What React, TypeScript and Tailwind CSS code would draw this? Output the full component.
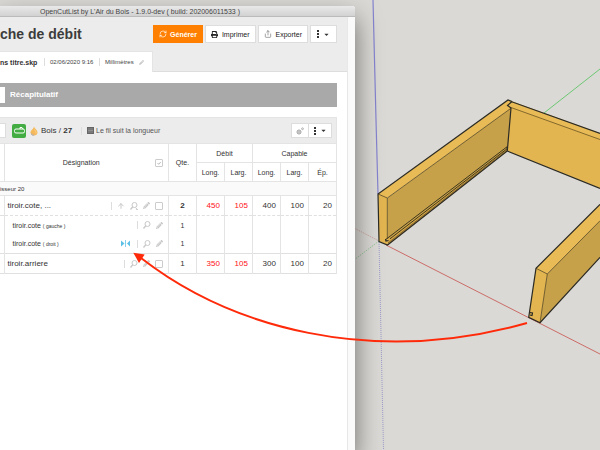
import { ArrowUp, RefreshCw, Share } from "lucide-react";
import type { ReactNode } from "react";
import { FaCaretDown, FaPencilAlt, FaPrint } from "react-icons/fa";

type PartRow = {
  name: string;
  note?: string;
  qty: number;
  cut?: [number, number];
  bulk?: [number, number, number];
  up?: boolean;
  mirror?: boolean;
};

const parts: PartRow[] = [
  { name: "tiroir.cote, ...", qty: 2, cut: [450, 105], bulk: [400, 100, 20], up: true },
  { name: "tiroir.cote", note: "( gauche )", qty: 1 },
  { name: "tiroir.cote", note: "( droit )", qty: 1, mirror: true },
  { name: "tiroir.arriere", qty: 1, cut: [350, 105], bulk: [300, 100, 20] },
];

function SearchIcon({ people = false }: { people?: boolean }) {
  return (
    <svg viewBox="0 0 16 16" className="size-2" fill="none" stroke="currentColor" strokeWidth="2">
      <circle cx="9" cy="6" r="5" />
      <path d="M5.5 9.5 1 15" strokeWidth="2.5" />
      {people && <path d="M11 11.5 15 15M12.500 15h3" />}
    </svg>
  );
}

function MirrorIcon() {
  return (
    <svg viewBox="0 0 18 14" className="mr-[2px] h-[7px] w-[9px]" fill="#5cc0e6">
      <path d="M0 1 7 7 0 13zM18 1 12 7 18 13zM8.500 0h1.500v14H8.500z" />
    </svg>
  );
}

function GearsIcon() {
  return (
    <svg viewBox="0 0 16 16" className="size-2" fill="none" stroke="#999" strokeWidth="2">
      <circle cx="6" cy="10" r="4" />
      <circle cx="6" cy="10" r="1" />
      <circle cx="13" cy="3.500" r="1.800" strokeWidth="1.500" />
    </svg>
  );
}

function MenuIcon() {
  return (
    <span className="flex items-center gap-1">
      <svg viewBox="0 0 2 8" className="h-2 w-[2px]" fill="#333">
        <path d="M0 0h2v2H0zM0 3h2v2H0zM0 6h2v2H0z" />
      </svg>
      <FaCaretDown className="size-[7px] text-[#333]" />
    </span>
  );
}

function ToolButton({ children }: { children: ReactNode }) {
  return (
    <button className="flex h-[18px] items-center gap-1 border border-[#ddd] bg-white px-[5px] text-[7px] text-[#222]">
      {children}
    </button>
  );
}

function Divider() {
  return <span className="h-2 w-px bg-[#ddd]" />;
}

function Header() {
  return (
    <header className="flex flex-col bg-[#ececec] pt-2">
      <div className="flex items-center justify-between pr-[10px]">
        <h1 className="text-[14px] font-bold text-[#3c3c3c]">che de débit</h1>
        <div className="flex gap-[2px]">
          <button className="flex h-[18px] items-center gap-[3px] bg-[#ff8000] px-[6px] text-[7px] font-bold text-white">
            <RefreshCw className="size-2" />
            Générer
          </button>
          <ToolButton>
            <FaPrint className="size-[7px]" />
            Imprimer
          </ToolButton>
          <ToolButton>
            <Share className="size-2 text-[#777]" />
            Exporter
          </ToolButton>
          <button aria-label="Menu" className="flex h-[18px] items-center border border-[#ddd] bg-white px-[6px]">
            <MenuIcon />
          </button>
        </div>
      </div>
      <div className="mt-2 flex h-[21px]">
        <div className="flex w-[153px] items-center gap-[5px] border-t border-r border-[#e4e4e4] bg-white text-[6px] text-[#444]">
          <strong className="w-[39px] text-[7px] text-[#333]">ns titre.skp</strong>
          <Divider />
          <span className="w-[44px]">02/06/2020 9:16</span>
          <Divider />
          <span>Millimètres</span>
          <FaPencilAlt className="size-[5px] text-[#c4c4c4]" />
        </div>
        <div className="flex-1 border-b border-[#ddd]" />
      </div>
    </header>
  );
}

function GroupBar() {
  return (
    <div className="mt-[10px] flex h-[26px] items-center border-t border-r border-[#e4e4e4] bg-[#ececec] pr-1">
      <button aria-label="Replier" className="h-[15px] w-[6px] border border-l-0 border-[#ddd] bg-white" />
      <button aria-label="Imprimer le groupe" className="ml-[6px] flex h-[14px] w-[14px] items-center justify-center rounded-[2px] bg-[#43ac43]">
        <svg viewBox="0 0 22 14" className="h-[7px] w-[11px]" fill="none" stroke="#fff" strokeWidth="2">
          <rect x="1" y="4" width="20" height="8" rx="3" />
          <path d="M12 4V1h4l2 3" />
        </svg>
      </button>
      <svg viewBox="0 0 16 20" className="ml-1 h-[10px] w-2">
        <path d="M8 1c1 5 7 6 7 12 0 4-3 6-7 6s-7-2-7-6C1 8 7 7 8 1z" fill="#f5b85a" />
        <path d="M3 13c0 3 3 5 6 4l-2 3C3 19 1 17 3 13z" fill="#b8b0b0" />
        <path d="M9 7c1 3 4 4 3 8" fill="none" stroke="#fbd58e" strokeWidth="2" />
      </svg>
      <span className="ml-[3px] w-[40px] text-[8px] text-[#333]">
        Bois / <strong>27</strong>
      </span>
      <Divider />
      <svg viewBox="0 0 14 14" className="ml-[5px] size-[7px]">
        <path d="M0 0h14v14H0z" fill="#666" />
        <path d="M2 4h10M2 7h10M2 10h10" stroke="#bbb" strokeWidth="1" />
      </svg>
      <span className="ml-[2px] text-[7px] text-[#555]">Le fil suit la longueur</span>
      <div className="ml-auto flex h-[15px] border border-[#ddd] bg-white">
        <button aria-label="Réglages" className="flex w-[17px] items-center justify-center border-r border-[#ddd]">
          <GearsIcon />
        </button>
        <button aria-label="Actions" className="flex w-[22px] items-center justify-center">
          <MenuIcon />
        </button>
      </div>
    </div>
  );
}

function PartTools({ part }: { part: PartRow }) {
  return (
    <span className="flex items-center gap-[5px] text-[#c8c8c8]">
      {part.mirror && <MirrorIcon />}
      <Divider />
      {part.up && <ArrowUp className="size-2" strokeWidth={3} />}
      <SearchIcon people={part.up} />
      <FaPencilAlt className="size-[7px]" />
      {!part.note && (
        <input
          type="checkbox"
          aria-label={part.name}
          className="size-2 appearance-none rounded-[1px] border border-[#ccc]"
        />
      )}
    </span>
  );
}

function PartLine({ part }: { part: PartRow }) {
  const cell = "border-x border-[#e4e4e4] p-0";
  const line = part.note ? "h-[19px]" : part.up ? "h-[20px] border-b border-dashed border-[#e0e0e0]" : "h-[20px] border-y border-[#e0e0e0]";
  const num = `${cell} pr-1 text-right`;
  return (
    <tr className={`${line} ${part.note ? "text-[7px]" : "text-[8px]"}`}>
      <td />
      <td className={cell}>
        <div className={`flex items-center justify-between pr-[5px] ${part.note ? "pl-2" : "pl-[3px]"}`}>
          <span>
            {part.name} {part.note && <span className="text-[5px]">{part.note}</span>}
          </span>
          <PartTools part={part} />
        </div>
      </td>
      <td className={`${cell} text-center ${part.up ? "font-bold" : ""}`}>{part.qty}</td>
      <td className={`${num} text-[#ff1018]`}>{part.cut?.[0]}</td>
      <td className={`${num} text-[#ff1018]`}>{part.cut?.[1]}</td>
      <td className={num}>{part.bulk?.[0]}</td>
      <td className={num}>{part.bulk?.[1]}</td>
      <td className={num}>{part.bulk?.[2]}</td>
    </tr>
  );
}

function PartsTable() {
  const head = "border border-[#e4e4e4] p-0 font-normal";
  return (
    <table className="w-full table-fixed border-collapse text-[7px] text-[#333]">
      <colgroup>
        <col className="w-1" />
        <col />
        <col className="w-7" />
        <col className="w-7" />
        <col className="w-7" />
        <col className="w-7" />
        <col className="w-7" />
        <col className="w-7" />
      </colgroup>
      <thead>
        <tr className="h-[19px]">
          <td rowSpan={2} className="border-y border-[#e4e4e4] p-0" />
          <th rowSpan={2} className={head}>
            <div className="flex items-center pr-[5px]">
              <span className="flex-1 pl-[3px]">Désignation</span>
              <span className="grid size-2 place-items-center">
                <input
                  type="checkbox"
                  defaultChecked
                  aria-label="Tout sélectionner"
                  className="col-start-1 row-start-1 size-2 appearance-none rounded-[1px] border border-[#ccc]"
                />
                <svg viewBox="0 0 8 8" className="pointer-events-none col-start-1 row-start-1 size-2" fill="none" stroke="#bbb">
                  <path d="m2.500 4 1.200 1.300L5.800 3" />
                </svg>
              </span>
            </div>
          </th>
          <th rowSpan={2} className={head}>Qte.</th>
          <th colSpan={2} className={head}>Débit</th>
          <th colSpan={3} className={head}>Capable</th>
        </tr>
        <tr className="h-[19px]">
          <th className={head}>Long.</th>
          <th className={head}>Larg.</th>
          <th className={head}>Long.</th>
          <th className={head}>Larg.</th>
          <th className={head}>Ép.</th>
        </tr>
      </thead>
      <tbody>
        <tr className="h-[14px] bg-[#fafafa] text-left text-[6px]">
          <th colSpan={8} className="border-y border-r border-[#e4e4e4] p-0 font-normal">isseur 20</th>
        </tr>
        {parts.map((part, i) => (
          <PartLine key={i} part={part} />
        ))}
      </tbody>
    </table>
  );
}

/* Drawer model behind the dialog */
function Scene() {
  return (
    <svg viewBox="0 0 600 450" preserveAspectRatio="xMinYMin slice" className="absolute inset-0 size-full" fill="none">
      <path d="m373 0 3 120 2 74" stroke="#8583cf" strokeWidth="1.200" />
      <path d="m379 242 4.500 208" stroke="#9a9acb" strokeDasharray="1 1" />
      <path d="M544 113 600 69" stroke="#6cc874" />
      <path d="m379 241-25 19" stroke="#83bd83" strokeDasharray="1.500 1" strokeWidth=".7" />
      <path d="m352 227 27 14" stroke="#c99086" strokeDasharray="1.500 1" strokeWidth=".7" />
      <path d="m386 245 214 109" stroke="#c9605b" strokeWidth=".9" />

      {/* back panel */}
      <path d="m508 100 92 33.300v55L507.300 151z" fill="#e2b551" />
      <path d="m508 100 92 33.300v6l-89-31.800z" fill="#e8bb57" />
      <path d="m511 107.500 89 32" stroke="#6b5422" strokeWidth=".8" />
      <path d="m511 101.500 89 32M507.300 151l92.700 37.500" stroke="#2b2a24" strokeWidth="1.200" />

      {/* left side */}
      <path d="m387.500 198 123.500-90-3.700 43-120 94z" fill="#c6a149" />
      <path d="m378 194 130-94 4 1.500-1 6.500-124 90z" fill="#e8bb57" />
      <path d="m378 194 9.300 4 .4 47-8.700-3.500z" fill="#e2b551" />
      <path d="m388 239.500 119.300-91.500v3L388 245z" fill="#d5a747" />
      <path d="m387.300 198 124-90M378 194l9.300 4v41" stroke="#59481f" strokeWidth=".8" />
      <path d="m386 239.300 121-92.500v2l-117 90" stroke="#2f2917" strokeWidth=".9" />
      <path d="m388 243 119-93" stroke="#6d5523" strokeWidth=".7" />
      <path d="M512 101.500 508 100l-130 94 1 47.500 8.500 3.500 119.800-94 3.700-43M512 101.500l-4.500 4 3.500 2.500M385.500 239l.5 2 2.500-.5" stroke="#2b2a24" strokeWidth="1.200" />

      {/* right side */}
      <path d="m536 268.300 64-64v16.500L547.300 274z" fill="#e8bb57" />
      <path d="m547.300 274 52.700-53.200v36.500L540 322.700z" fill="#c6a149" />
      <path d="m536 268.300 11.300 5.700-7.300 48.700-11.300-5.400z" fill="#e2b551" />
      <path d="m536 268.300 11.300 5.700 52.700-53.200M547.300 274l-7.300 48.700" stroke="#59481f" strokeWidth=".8" />
      <path d="m600 204.300-64 64-7.300 49 11.300 5.400 60-65.400M530 312.500l2.500.5-.5 2.500-2-.5" stroke="#2b2a24" strokeWidth="1.200" />
    </svg>
  );
}

/* Annotation linking the mirrored part to its row */
function Arrow() {
  return (
    <svg
      viewBox="0 0 600 450"
      preserveAspectRatio="xMinYMin slice"
      className="pointer-events-none absolute inset-0 size-full"
    >
      <path d="M141 258C230 327 370 367 527 323" fill="none" stroke="#ff2a0a" strokeWidth="2" />
      <path d="m133.300 252.700 11.400 1.800-5.700 8.500z" fill="#ff2a0a" />
    </svg>
  );
}

export default function App() {
  return (
    <main className="relative flex min-h-screen flex-col overflow-hidden bg-[#dad9d5] pt-[6px] font-['Liberation_Sans',Arial,sans-serif] leading-none">
      <Scene />
      <section className="relative flex w-[59%] min-w-[355px] flex-1 flex-col rounded-tr-[3px] bg-white shadow-[0_12px_26px_rgba(0,0,0,0.5)]">
        <div className="flex h-[11px] items-center justify-center rounded-tr-[3px] border-b border-[#bbb] bg-linear-to-b from-[#e9e9e9] to-[#d2d2d2] pr-[75px] text-[7px] whitespace-nowrap text-[#444]">
          OpenCutList by L'Air du Bois - 1.9.0-dev ( build: 202006011533 )
        </div>
        <div className="flex flex-1">
          <div className="min-w-0 flex-1">
            <Header />
            <div className="pt-[11px] pr-[10px]">
              <div className="flex h-6 items-center gap-[5px] bg-[#a9a9a9]">
                <button aria-label="Ouvrir" className="h-4 w-[5px] bg-white" />
                <h2 className="text-[8px] font-bold text-white">Récapitulatif</h2>
              </div>
              <GroupBar />
              <PartsTable />
            </div>
          </div>
          <div className="w-2 border-l border-[#e8e8e8] bg-[#fafafa]" />
        </div>
      </section>
      <Arrow />
    </main>
  );
}
